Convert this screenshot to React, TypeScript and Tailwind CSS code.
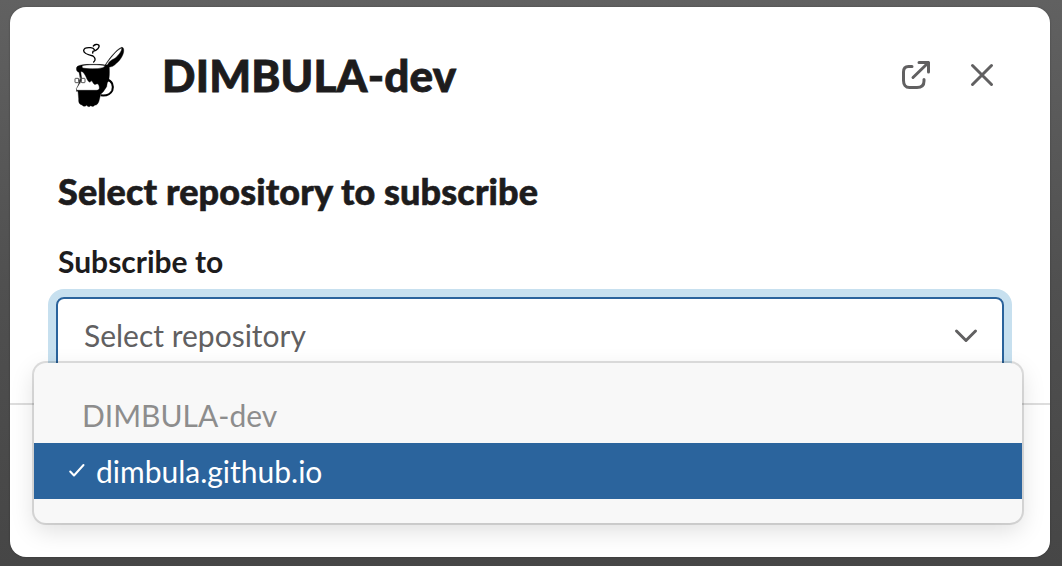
import React from "react";

function Logo() {
  return (
    <svg className="h-[90px] w-[80px] shrink-0" viewBox="0 0 240 270" fill="none" stroke="#000" aria-hidden="true">
      <path d="M101 96C107 91 107 84 99 78C86 75 70 69 71 61C72 54 81 52 92 53C98 54 102 57 103 59" strokeWidth="4" strokeLinecap="round" />
      <path d="M100 48C104 43 112 42 116 45C121 52 110 61 99 64L98 69" strokeWidth="4" strokeLinecap="round" />
      <path d="M142 149C156 152 161 166 157 181C151 194 139 198 122 196" fill="#fff" strokeWidth="6" />
      <path d="M134 107L146 89C157 75 174 55 185 52C191 51 192 58 191 66C188 83 174 98 158 109L136 115Z" fill="#000" strokeWidth="1" />
      <path d="M136 105L149 88C160 74 174 57 186 54C185 64 176 76 166 84C157 90 149 91 143 104Z" fill="#fff" strokeWidth="1.5" />
      <path d="M50 112C54 104 75 103 100 103C126 103 144 104 148 113C149 130 148 142 146 152L142 158L140 170L130 185L122 193L118 209C116 218 113 225 104 226C101 231 96 229 92 227C88 232 83 230 80 226C75 231 69 229 66 225C58 224 55 216 56 207L54 184H49L55 164L62 145L57 127C50 126 48 118 50 112Z" fill="#000" />
      <path d="M66 107C80 103 119 103 136 107L129 113C111 118 83 117 67 114Z" fill="#fff" strokeWidth="1.5" />
      <path d="M62 125C68 122 73 131 77 138C80 144 83 153 88 156C93 157 92 151 96 153C100 158 101 165 107 163C113 159 117 163 118 172C119 177 116 181 109 181H50L49 176L57 163L65 147Z" fill="#fff" strokeWidth="1.5" />
      <path d="M60 125V143" strokeWidth="2" />
      <rect x="45" y="145" width="11" height="13" rx="2" fill="#fff" stroke="#333" strokeWidth="2.5" />
      <rect x="64" y="145" width="11" height="13" rx="2" fill="#fff" stroke="#333" strokeWidth="2.5" />
      <path d="M56 151H64M60 145V160" stroke="#333" strokeWidth="2.5" />
    </svg>
  );
}

function ExternalLinkIcon() {
  return (
    <svg className="h-9 w-9" viewBox="0 0 36 36" fill="none" stroke="#616061" strokeWidth="3" strokeLinecap="round" strokeLinejoin="round">
      <path d="M14 9.5H10.5C7 9.5 5.5 11.5 5.5 15V23.5C5.5 27.5 7.5 30.5 11.5 30.5H19C23.5 30.5 26 28 26 24V22.5M15 20.5L30.5 5.5M21 5.5H30.5V15" />
    </svg>
  );
}

function CloseIcon() {
  return (
    <svg className="h-9 w-9" viewBox="0 0 36 36" fill="none" stroke="#616061" strokeWidth="3" strokeLinecap="round">
      <path d="M8.5 8.5L27.5 27.5M27.5 8.5L8.5 27.5" />
    </svg>
  );
}

export default function App() {
  return (
    <div className="h-[566px] w-[1062px] overflow-hidden bg-linear-to-b from-[#616161] via-[#505050] to-[#464646] px-[10px] pt-[7px] font-['Lato',sans-serif] text-[#1d1c1d]">
      <div className="h-[550px] w-[1040px] rounded-2xl bg-white shadow-[0_0_2px_rgba(0,0,0,0.3)]">
        <header className="flex h-[136px] items-center pr-[50px] pl-[50px]">
          <Logo />
          <h1 className="ml-[22px] flex-1 text-[44px] leading-[52px] font-black tracking-[0.16px] [-webkit-text-stroke:0.8px_#1d1c1d]">DIMBULA-dev</h1>
          <div className="flex gap-[30px]">
            <button aria-label="Open in new window"><ExternalLinkIcon /></button>
            <button aria-label="Close"><CloseIcon /></button>
          </div>
        </header>
        <main className="h-[262px] border-b-2 border-[#dddddd] px-12 pt-[24px]">
          <h2 className="text-[36px] leading-[48px] font-black tracking-[0.12px] [-webkit-text-stroke:0.6px_#1d1c1d]">Select repository to subscribe</h2>
          <label className="mt-[24px] block text-[30px] leading-[44px] font-bold">Subscribe to</label>
          <div className="relative mt-[14px]">
            <div className="-mx-[2px] flex h-[78px] w-[948px] items-center justify-between rounded-lg border-2 border-[#2a639c] pr-[22px] pl-[26px] shadow-[0_0_0_8px_#c7e0ef]">
              <span className="pb-[2px] text-[30px] leading-[40px] text-[#616061]">Select repository</span>
              <svg className="h-7 w-7" viewBox="0 0 28 28" fill="none" stroke="#616061" strokeWidth="3" strokeLinecap="round" strokeLinejoin="round">
                <path d="M4.5 9L14 18.5L23.5 9" />
              </svg>
            </div>
            <div className="absolute top-[66px] -left-6 h-[160px] w-[988px] overflow-hidden rounded-xl bg-[#f8f8f8] pt-[30px] shadow-[0_0_0_2px_rgba(29,28,29,0.14),0_8px_24px_rgba(0,0,0,0.13)]">
              <div className="h-[50px] pl-[48px] text-[30px] leading-[44px] text-[#8d8d8d]">DIMBULA-dev</div>
              <div className="flex h-[56px] items-center bg-[#2b649d] pl-[34px] text-[30px] leading-[56px] text-white">
                <svg className="mr-[10px] h-[18px] w-[18px]" viewBox="0 0 18 18" fill="none" stroke="#fff" strokeWidth="2" strokeLinecap="round" strokeLinejoin="round">
                  <path d="M2.2 9.5L6 13.5L15.5 3" />
                </svg>
                <span>dimbula.github.io</span>
              </div>
            </div>
          </div>
        </main>
      </div>
    </div>
  );
}
